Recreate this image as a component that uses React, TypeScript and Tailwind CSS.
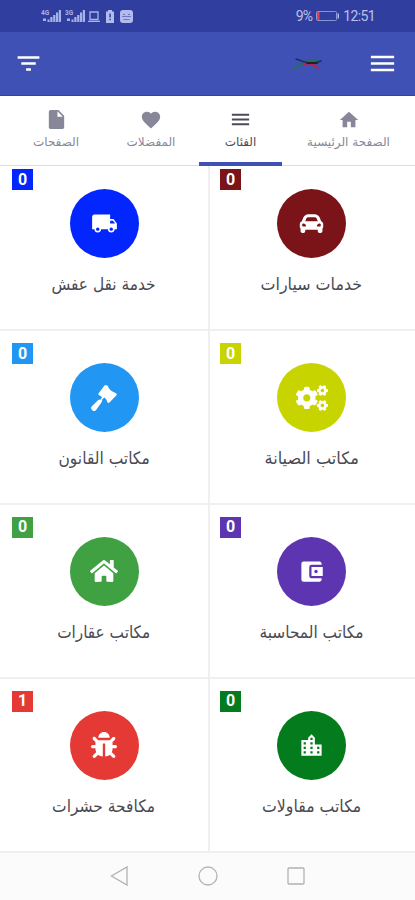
import type { ReactNode } from "react";
import { FaBug, FaCarAlt, FaCogs, FaHome } from "react-icons/fa";
import {
  MdAccountBalanceWallet,
  MdFavorite,
  MdFilterList,
  MdHome,
  MdInsertDriveFile,
  MdLocalShipping,
  MdLocationCity,
  MdMenu,
} from "react-icons/md";

type Category = {
  label: string;
  count: number;
  color: string;
  icon: ReactNode;
  labelClass: string;
};

type Tab = {
  label: string;
  icon: ReactNode;
  width: string;
  active?: boolean;
};

function GavelIcon() {
  return (
    <svg width="26" height="26" viewBox="0 0 26 26" fill="#fff">
      <path d="M13.500.6c1-.7 2.900-.4 3.400.7.800 2.100 2.100 3.700 4.100 5 1.200.8 2.800 1.200 4 1.900.9.500 1 1.500.3 2.200l-6.900 7.200c-.8.7-1.900.4-2.100-.6-.4-1.700-1.300-3.200-2.900-4.400l-2.300 1.900c.2 1.200 0 2.300-.8 3.300l-5.200 7.200c-1 1.400-2.300 1.500-3.500.5l-.8-.8c-1.100-1-1-2.400.1-3.500l5.800-5.600c.8-.8 1.900-1.300 3.100-1.100l1.200-2.300c-.8-1-1.700-1.500-2.800-1.900-.9-.3-1.100-1-.7-1.700z" />
    </svg>
  );
}

const categories: Category[] = [
  {
    label: "خدمات سيارات",
    count: 0,
    color: "bg-[#7a1418]",
    icon: <FaCarAlt size={25} />,
    labelClass: "scale-x-[0.935]",
  },
  {
    label: "خدمة نقل عفش",
    count: 0,
    color: "bg-[#0326ff]",
    icon: <MdLocalShipping size={27} />,
    labelClass: "scale-x-[0.905]",
  },
  {
    label: "مكاتب الصيانة",
    count: 0,
    color: "bg-[#c8d400]",
    icon: <FaCogs size={32} />,
    labelClass: "scale-x-[0.95]",
  },
  {
    label: "مكاتب القانون",
    count: 0,
    color: "bg-[#2196f3]",
    icon: <GavelIcon />,
    labelClass: "scale-x-[0.91]",
  },
  {
    label: "مكاتب المحاسبة",
    count: 0,
    color: "bg-[#5e35b1]",
    icon: <MdAccountBalanceWallet size={27} />,
    labelClass: "scale-x-[0.905]",
  },
  {
    label: "مكاتب عقارات",
    count: 0,
    color: "bg-[#3fa142]",
    icon: <FaHome size={28} />,
    labelClass: "scale-x-[0.9]",
  },
  {
    label: "مكاتب مقاولات",
    count: 0,
    color: "bg-[#047b1d]",
    icon: <MdLocationCity size={27} />,
    labelClass: "scale-x-[0.925]",
  },
  {
    label: "مكافحة حشرات",
    count: 1,
    color: "bg-[#e53935]",
    icon: <FaBug size={26} />,
    labelClass: "scale-x-[0.91]",
  },
];

const tabs: Tab[] = [
  { label: "الصفحة الرئيسية", icon: <MdHome size={22} />, width: "w-[133px]" },
  { label: "الفئات", icon: <MdMenu size={23} />, width: "w-[83px]", active: true },
  { label: "المفضلات", icon: <MdFavorite size={22} />, width: "w-[96px]" },
  { label: "الصفحات", icon: <MdInsertDriveFile size={23} />, width: "w-[94px]" },
];

function Signal({ network }: { network: string }) {
  return (
    <svg width="20" height="14" viewBox="0 0 20 14" fill="#a9b2e8">
      <text x="0" y="5.5" fontSize="6.5" fontWeight="700" fontFamily="Roboto, sans-serif">
        {network}
      </text>
      <path d="M2 9.500h3V12H2zM6.500 10.500h2V13h-2zM9.300 8h2.200v5H9.300zM12.200 6h2.200v7h-2.200zM15 3.500h2.200V13H15zM17.800 1H20v12h-2.200z" />
    </svg>
  );
}

function StatusBar() {
  return (
    <div dir="ltr" className="flex h-8 shrink-0 items-center bg-[#303f9f] pl-[41px] text-[#b9c0ec]">
      <Signal network="4G" />
      <div className="ml-1">
        <Signal network="3G" />
      </div>
      <svg className="ml-[3px]" width="12" height="13" viewBox="0 0 12 13" fill="none" stroke="#a9b2e8" strokeWidth="1.3">
        <path d="M2 2h8v7.500H2zM0 11.300h12" />
      </svg>
      <svg className="ml-1.5" width="8" height="13" viewBox="0 0 8 13">
        <path d="M2 0h4v1.500h2V13H0V1.500h2z" fill="#b3bbed" />
        <path d="M3.300 3.500h1.500v4H3.300zM3.300 8.700h1.500v1.600H3.300z" fill="#303f9f" />
      </svg>
      <svg className="ml-1.5" width="13" height="13" viewBox="0 0 13 13">
        <rect width="13" height="13" rx="3" fill="#b3bbed" />
        <path d="M2 6.500h9M3 4.500h2M8 4.500h2M3.500 9.500h6" stroke="#6c78c4" />
      </svg>
      <span className="ml-auto font-[Roboto,sans-serif] text-sm leading-none tracking-[-0.9px]">9%</span>
      <svg className="ml-1" width="24" height="10" viewBox="0 0 24 10" fill="none">
        <rect x=".5" y=".5" width="20" height="9" rx="1" stroke="#8893d5" />
        <path d="M1 1h2.500v8H1z" fill="#e2434c" />
        <path d="M21.500 2.500H23v5h-1.500z" fill="#b3bbed" />
      </svg>
      <span className="mr-10 ml-[3px] font-[Roboto,sans-serif] text-sm leading-none tracking-[-0.6px]">12:51</span>
    </div>
  );
}

function AppBar() {
  return (
    <header className="flex h-16 shrink-0 items-center border-b border-[#2e42a8] bg-[#3f51b5] pr-[17px] pl-3.5 text-white">
      <MdMenu size={31} />
      <svg className="mr-[43px] ml-auto" width="32" height="14" viewBox="0 0 32 14" fill="none" strokeLinecap="round">
        <path d="M2 12C9 7 16 2 27 3" stroke="#23724f" strokeWidth="1.7" />
        <path d="M4 2c8 3 16 6 25 2" stroke="#202b5c" strokeWidth="1.4" />
        <path d="M12 7c7-1.500 10 1 14 4" stroke="#b52255" strokeWidth="2" />
        <path d="M15 6h10" stroke="#271d30" strokeWidth="1.8" />
      </svg>
      <MdFilterList size={29} />
    </header>
  );
}

function TabBar() {
  return (
    <nav className="flex h-[70px] shrink-0 border-b border-[#dedee0] bg-white">
      {tabs.map((tab) => (
        <div
          key={tab.label}
          className={`flex shrink-0 flex-col items-center pt-3 ${tab.width} ${
            tab.active ? "h-[70px] border-b-4 border-[#3f51b5] text-[#4b4b5c]" : "text-[#88879a]"
          }`}
        >
          <div className="flex h-[23px] items-center">{tab.icon}</div>
          <span className="mt-0.5 text-xs leading-[18px] whitespace-nowrap">{tab.label}</span>
        </div>
      ))}
    </nav>
  );
}

function CategoryCell({ category, divided }: { category: Category; divided: boolean }) {
  return (
    <div
      className={`relative flex h-[173.8px] flex-col items-center border-b-2 border-[#efeff0] pt-8 ${
        divided ? "border-l-2 pr-0.5" : ""
      }`}
    >
      <span
        dir="ltr"
        className={`absolute top-3 flex h-[21px] w-[21px] items-center justify-center font-[Roboto,sans-serif] text-base font-bold text-white ${
          divided ? "left-2.5" : "left-3"
        } ${category.color}`}
      >
        {category.count}
      </span>
      <div className={`flex h-[69px] w-[69px] items-center justify-center rounded-full text-white ${category.color}`}>
        {category.icon}
      </div>
      <span className={`mt-3.5 text-[17px] leading-6 whitespace-nowrap text-[#4a4a52] ${category.labelClass}`}>
        {category.label}
      </span>
    </div>
  );
}

function SystemNav() {
  return (
    <div dir="ltr" className="flex h-[47.5px] shrink-0 items-center justify-center bg-[#fbfbfb]">
      <svg width="200" height="22" viewBox="0 0 200 22" fill="none" stroke="#b3b3b3" strokeWidth="1.3">
        <path d="M19 2v18L3.500 11z" />
        <circle cx="100" cy="11" r="9" />
        <rect x="180" y="3" width="16" height="16" rx="1" />
      </svg>
    </div>
  );
}

export default function App() {
  return (
    <div
      dir="rtl"
      className="flex h-[900px] w-[415px] flex-col overflow-hidden bg-white font-['DejaVu_Sans',sans-serif]"
    >
      <StatusBar />
      <AppBar />
      <TabBar />
      {/* First row is partly scrolled under the tabs */}
      <main className="grid min-h-0 flex-1 grid-cols-[207px_208px] content-end overflow-hidden">
        {categories.map((category, index) => (
          <CategoryCell key={category.label} category={category} divided={index % 2 === 0} />
        ))}
      </main>
      <SystemNav />
    </div>
  );
}
